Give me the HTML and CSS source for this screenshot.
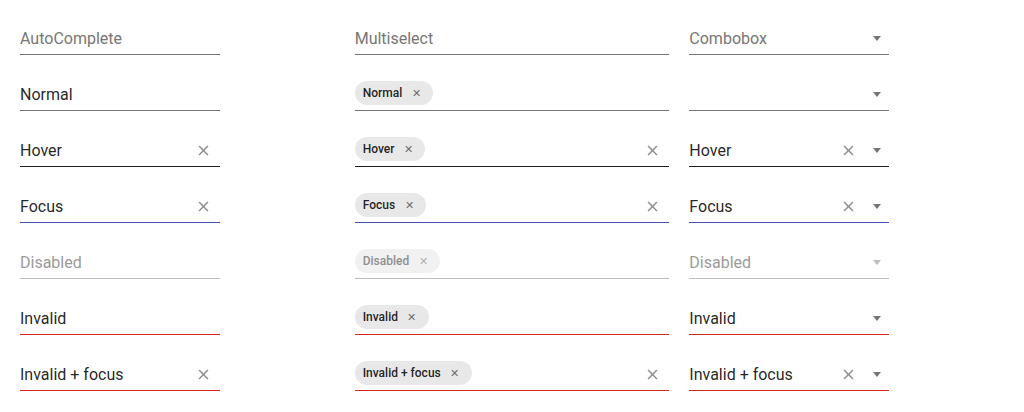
FILE: index.html
```html
<!DOCTYPE html>
<html>
<head>
<meta charset="utf-8">
<link rel="stylesheet" href="styles.css">
</head>
<body>
<div class="grid">
  <div class="col">
    <div class="field short"><span class="value placeholder">AutoComplete</span></div>
    <div class="field short"><span class="value">Normal</span></div>
    <div class="field short hover"><span class="value">Hover</span><span class="clear"><svg viewBox="0 0 24 24"><path d="M19 6.41L17.59 5 12 10.59 6.41 5 5 6.41 10.59 12 5 17.59 6.41 19 12 13.41 17.59 19 19 17.59 13.41 12z"/></svg></span></div>
    <div class="field short focus"><span class="value">Focus</span><span class="clear"><svg viewBox="0 0 24 24"><path d="M19 6.41L17.59 5 12 10.59 6.41 5 5 6.41 10.59 12 5 17.59 6.41 19 12 13.41 17.59 19 19 17.59 13.41 12z"/></svg></span></div>
    <div class="field short disabled"><span class="value">Disabled</span></div>
    <div class="field short invalid"><span class="value">Invalid</span></div>
    <div class="field short invalid"><span class="value">Invalid + focus</span><span class="clear"><svg viewBox="0 0 24 24"><path d="M19 6.41L17.59 5 12 10.59 6.41 5 5 6.41 10.59 12 5 17.59 6.41 19 12 13.41 17.59 19 19 17.59 13.41 12z"/></svg></span></div>
  </div>
  <div class="col">
    <div class="field wide"><span class="value placeholder">Multiselect</span></div>
    <div class="field wide"><span class="chip">Normal<span class="chip-x">✕</span></span></div>
    <div class="field wide hover"><span class="chip">Hover<span class="chip-x">✕</span></span><span class="clear push"><svg viewBox="0 0 24 24"><path d="M19 6.41L17.59 5 12 10.59 6.41 5 5 6.41 10.59 12 5 17.59 6.41 19 12 13.41 17.59 19 19 17.59 13.41 12z"/></svg></span></div>
    <div class="field wide focus"><span class="chip">Focus<span class="chip-x">✕</span></span><span class="clear push"><svg viewBox="0 0 24 24"><path d="M19 6.41L17.59 5 12 10.59 6.41 5 5 6.41 10.59 12 5 17.59 6.41 19 12 13.41 17.59 19 19 17.59 13.41 12z"/></svg></span></div>
    <div class="field wide disabled"><span class="chip">Disabled<span class="chip-x">✕</span></span></div>
    <div class="field wide invalid"><span class="chip">Invalid<span class="chip-x">✕</span></span></div>
    <div class="field wide invalid"><span class="chip">Invalid + focus<span class="chip-x">✕</span></span><span class="clear push"><svg viewBox="0 0 24 24"><path d="M19 6.41L17.59 5 12 10.59 6.41 5 5 6.41 10.59 12 5 17.59 6.41 19 12 13.41 17.59 19 19 17.59 13.41 12z"/></svg></span></div>
  </div>
  <div class="col">
    <div class="field short"><span class="value placeholder">Combobox</span><span class="arrow"></span></div>
    <div class="field short"><span class="value"></span><span class="arrow"></span></div>
    <div class="field short hover"><span class="value">Hover</span><span class="clear"><svg viewBox="0 0 24 24"><path d="M19 6.41L17.59 5 12 10.59 6.41 5 5 6.41 10.59 12 5 17.59 6.41 19 12 13.41 17.59 19 19 17.59 13.41 12z"/></svg></span><span class="arrow"></span></div>
    <div class="field short focus"><span class="value">Focus</span><span class="clear"><svg viewBox="0 0 24 24"><path d="M19 6.41L17.59 5 12 10.59 6.41 5 5 6.41 10.59 12 5 17.59 6.41 19 12 13.41 17.59 19 19 17.59 13.41 12z"/></svg></span><span class="arrow"></span></div>
    <div class="field short disabled"><span class="value">Disabled</span><span class="arrow"></span></div>
    <div class="field short invalid"><span class="value">Invalid</span><span class="arrow"></span></div>
    <div class="field short invalid"><span class="value">Invalid + focus</span><span class="clear"><svg viewBox="0 0 24 24"><path d="M19 6.41L17.59 5 12 10.59 6.41 5 5 6.41 10.59 12 5 17.59 6.41 19 12 13.41 17.59 19 19 17.59 13.41 12z"/></svg></span><span class="arrow"></span></div>
  </div>
</div>
</body>
</html>
```
FILE: styles.css
```css
html, body {
  margin: 0;
  padding: 0;
  background: #ffffff;
}
body {
  font-family: Roboto, "Liberation Sans", sans-serif;
  color: rgba(0, 0, 0, 0.87);
}
.grid {
  display: grid;
  grid-template-columns: repeat(3, 1fr);
  padding: 6px 0 0 20px;
}
.col {
  display: flex;
  flex-direction: column;
  gap: 7px;
  padding-right: 20px;
}
.field {
  display: flex;
  align-items: center;
  height: 24px;
  padding: 20px 0 4px;
  border-bottom: 1px solid #767676;
}
.field.short { width: 200px; }
.field.wide { width: 100%; }
.value {
  flex: 1;
  font-size: 16px;
  line-height: 24px;
  margin-top: 2px;
  white-space: nowrap;
}
.placeholder { color: #767676; }
.hover { border-bottom-color: #1f1f1f; }
.focus { border-bottom-color: #3f51b5; }
.invalid { border-bottom-color: #d9261c; }
.disabled { border-bottom-color: #bdbdbd; }
.disabled .value { color: #9a9a9a; }
.clear {
  width: 17px;
  height: 17px;
  margin-right: 8px;
  display: flex;
}
.clear svg {
  width: 17px;
  height: 17px;
  fill: #8a8a8a;
}
.push { margin-left: auto; }
.arrow {
  width: 0;
  height: 0;
  border-left: 4px solid transparent;
  border-right: 4px solid transparent;
  border-top: 5px solid #757575;
  margin: 0 8px 0 8px;
}
.disabled .arrow { border-top-color: #bdbdbd; }
.chip {
  display: inline-flex;
  align-items: center;
  height: 24px;
  margin-bottom: 2px;
  padding: 0 11px 0 8px;
  border-radius: 12px;
  background: #e8e8e8;
  font-size: 12px;
  font-weight: 500;
  color: rgba(0, 0, 0, 0.87);
  white-space: nowrap;
}
.chip-x {
  width: 12px;
  margin-left: 8px;
  text-align: center;
  font-size: 11px;
  color: #6e6e6e;
}
.disabled .chip {
  background: #f1f1f1;
  color: #8f8f8f;
}
.disabled .chip-x { color: #b0b0b0; }
```
